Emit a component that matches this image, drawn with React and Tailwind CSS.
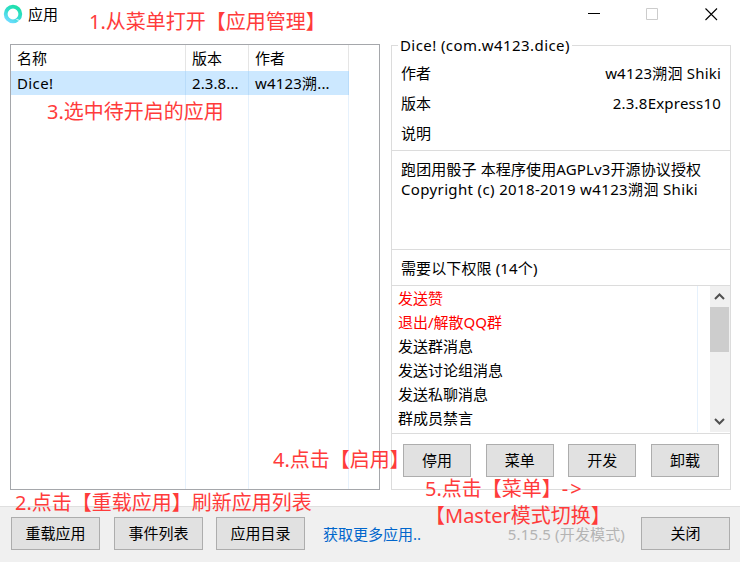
const permissions = [
  { name: "发送赞", sensitive: true },
  { name: "退出/解散QQ群", sensitive: true },
  { name: "发送群消息" },
  { name: "发送讨论组消息" },
  { name: "发送私聊消息" },
  { name: "群成员禁言" },
];

function Button({ className, children }) {
  return (
    <button className={`h-[33px] shrink-0 border border-[#adadad] bg-[#e1e1e1] text-center leading-[31px] ${className}`}>
      {children}
    </button>
  );
}

function TitleBar() {
  return (
    <header className="flex h-[44px] items-start">
      <svg className="ml-[3px] mt-[4px] h-5 w-5" viewBox="0 0 20 20" fill="none">
        <defs>
          <linearGradient id="ring" x1="0.8" y1="0" x2="0.2" y2="1">
            <stop offset="0" stopColor="#1ee0a8" />
            <stop offset="0.5" stopColor="#35dcd0" />
            <stop offset="1" stopColor="#6cdcff" />
          </linearGradient>
        </defs>
        <circle cx="10" cy="10" r="7.3" stroke="url(#ring)" strokeWidth="3.8" />
        <path d="M13.500 15.500 18.500 17" stroke="#fff" strokeWidth="0.9" />
      </svg>
      <h1 className="ml-[5px] mt-[4px] leading-[20px]">应用</h1>
      <svg className="ml-auto mr-[22px] mt-[7px]" width="130" height="14" viewBox="0 0 130 14" fill="none">
        <path d="M0 6.500h12" stroke="#000" />
        <path d="M58.500 1.500h11v11h-11z" stroke="#ccc" />
        <path d="m117.500 1.500 11.500 11.500m0-11.500-11.500 11.500" stroke="#000" strokeWidth="1.100" />
      </svg>
    </header>
  );
}

function AppTable() {
  return (
    <section className="flex h-[446px] w-[370px] border border-[#a5a7ab]">
      <div className="w-[175px] border-r border-[#e6f1fc]">
        <div className="-mr-px h-[26px] border-r border-[#e5e5e5] pl-[6px] leading-[27px]">名称</div>
        <div className="-mr-px h-[24px] border-r border-[#b9dcfa] bg-[#cce8ff] pl-[6px] leading-[25px] tracking-[0.4px]">Dice!</div>
      </div>
      <div className="w-[63px] border-r border-[#e6f1fc]">
        <div className="-mr-px h-[26px] border-r border-[#e5e5e5] pl-[6px] leading-[27px]">版本</div>
        <div className="-mr-px h-[24px] border-r border-[#b9dcfa] bg-[#cce8ff] pl-[6px] leading-[25px] tracking-[0.1px]">2.3.8...</div>
      </div>
      <div className="w-[100px] border-r border-[#e6f1fc]">
        <div className="-mr-px h-[26px] border-r border-[#e5e5e5] pl-[6px] leading-[27px]">作者</div>
        <div className="-mr-px h-[24px] border-r border-[#b9dcfa] bg-[#cce8ff] pl-[6px] leading-[25px] tracking-[0.18px]">w4123溯...</div>
      </div>
    </section>
  );
}

function Scrollbar() {
  return (
    <div className="flex h-[146px] w-[20px] flex-col bg-[#f0f0f0]">
      <svg width="20" height="21" viewBox="0 0 20 21" fill="none" stroke="#505050" strokeWidth="2">
        <path d="m5 13 4.500-4.500L14 13" />
      </svg>
      <div className="h-[45px] w-[19px] bg-[#cdcdcd]" />
      <svg className="mt-auto" width="20" height="21" viewBox="0 0 20 21" fill="none" stroke="#505050" strokeWidth="2">
        <path d="m5 8 4.500 4.500L14 8" />
      </svg>
    </div>
  );
}

function Details() {
  return (
    <section className="relative mt-[1px] h-[445px] w-[340px] border border-[#dcdcdc]">
      <h2 className="absolute left-[6px] top-[-12px] w-[174px] bg-white pl-[2px] leading-[22px] tracking-[0.42px] whitespace-nowrap">
        Dice! (com.w4123.dice)
      </h2>
      <div className="flex h-[105px] flex-col border-b border-[#dcdcdc] pl-[9px] pr-[9px] pt-[12px] leading-[30px]">
        <div className="flex justify-between"><span>作者</span><span className="tracking-[0.2px]">w4123溯洄 Shiki</span></div>
        <div className="flex justify-between"><span>版本</span><span className="tracking-[0.22px]">2.3.8Express10</span></div>
        <div>说明</div>
      </div>
      <div className="h-[99px] border-b border-[#dcdcdc] pl-[9px] pt-[8px] leading-[20px] whitespace-nowrap">
        <p className="tracking-[0.13px]">跑团用骰子 本程序使用AGPLv3开源协议授权</p>
        <p className="tracking-[0.36px]">Copyright (c) 2018-2019 w4123溯洄 Shiki</p>
      </div>
      <div className="h-[36px] border-b border-[#dcdcdc] pl-[9px] leading-[36px] tracking-[0.12px]">需要以下权限 (14个)</div>
      <div className="flex h-[148px] border-b border-[#dcdcdc]">
        <ul className="h-[146px] w-[306px] border-r border-[#e6f1fc] pl-[6px] leading-[24px]">
          {permissions.map((p) => (
            <li key={p.name} className={p.sensitive ? "text-[#ff0000]" : ""}>{p.name}</li>
          ))}
        </ul>
        <div className="ml-[12px]"><Scrollbar /></div>
      </div>
      <div className="flex justify-between px-[11px] pt-[10px]">
        <Button className="w-[68px]">停用</Button>
        <Button className="w-[68px]">菜单</Button>
        <Button className="w-[68px]">开发</Button>
        <Button className="w-[68px]">卸载</Button>
      </div>
    </section>
  );
}

function Note({ className, children }) {
  return <p className={`absolute text-[20px] leading-[24px] whitespace-nowrap text-[#ff3b3b] ${className}`}>{children}</p>;
}

export default function App() {
  return (
    <div className="relative flex h-[562px] w-[740px] flex-col overflow-hidden bg-white font-['Noto_Sans','Noto_Sans_CJK_SC',sans-serif] text-[15px] text-black">
      <TitleBar />
      <main className="flex h-[462px] gap-[11px] pl-[10px]">
        <AppTable />
        <Details />
      </main>
      <footer className="flex h-[56px] items-start border-t border-[#dfdfdf] bg-[#f0f0f0] pl-[11px] pr-[10px] pt-[10px]">
        <Button className="w-[89px]">重载应用</Button>
        <Button className="ml-[14px] w-[89px]">事件列表</Button>
        <Button className="ml-[13px] w-[89px]">应用目录</Button>
        <a className="ml-[18px] leading-[35px] text-[#0066cc]">获取更多应用..</a>
        <span className="ml-auto mr-[16px] leading-[35px] tracking-[0.15px] text-[#b4b4b4]">5.15.5 (开发模式)</span>
        <Button className="w-[89px]">关闭</Button>
      </footer>
      <Note className="left-[89px] top-[10px]">1.从菜单打开【应用管理】</Note>
      <Note className="left-[15px] top-[491px]">2.点击【重载应用】刷新应用列表</Note>
      <Note className="left-[47px] top-[100px]">3.选中待开启的应用</Note>
      <Note className="left-[273px] top-[448px]">4.点击【启用】</Note>
      <Note className="left-[425px] top-[477px]">5.点击【菜单】<span className="tracking-[2px]">-&gt;</span></Note>
      <Note className="left-[425px] top-[504px]">【Master模式切换】</Note>
    </div>
  );
}
